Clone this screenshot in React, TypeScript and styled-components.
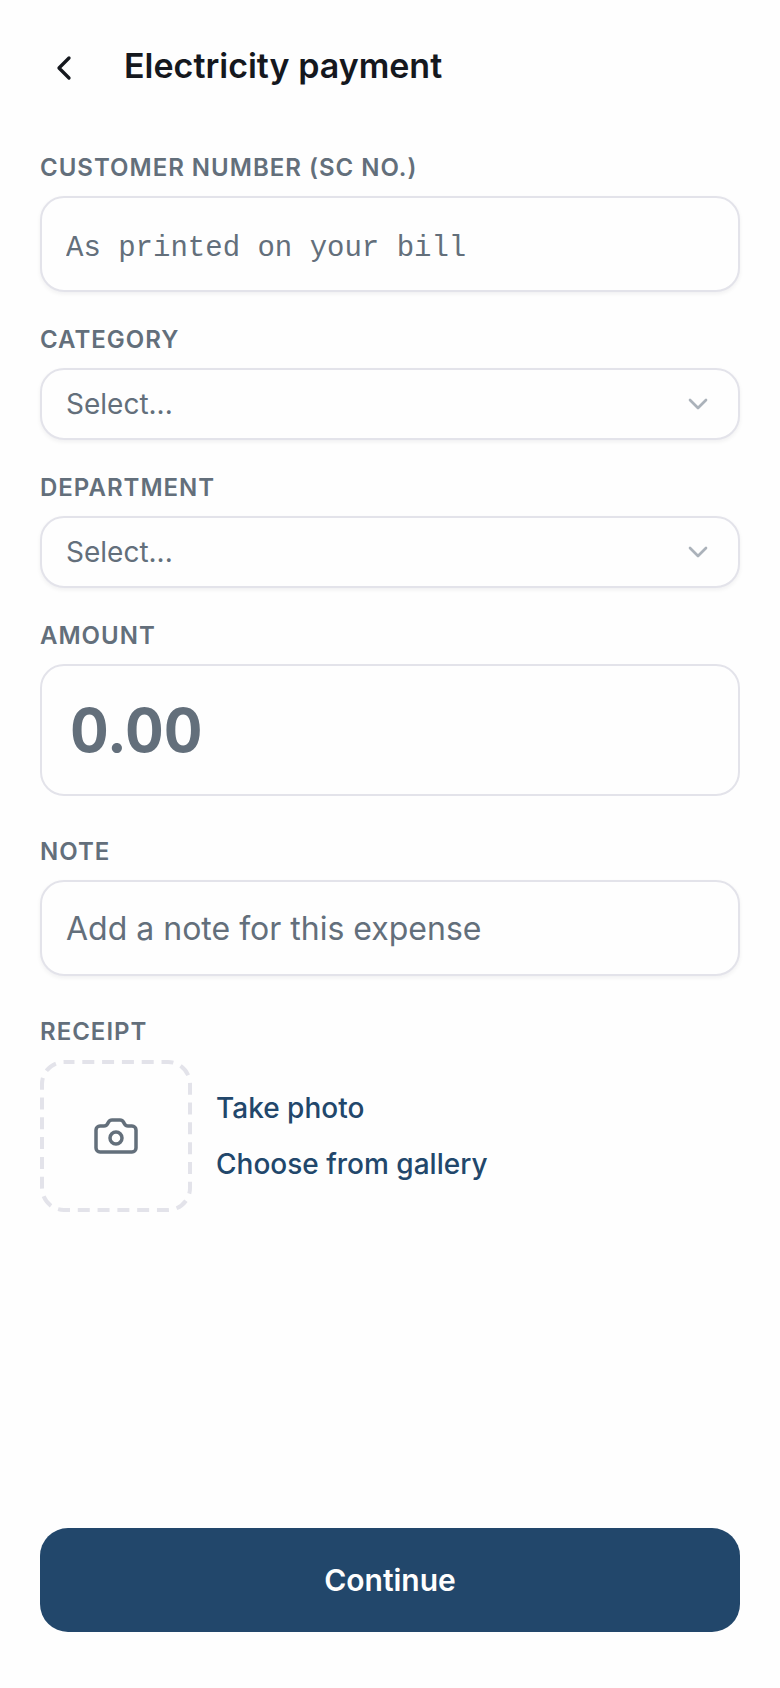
import React, { useRef, useState } from "react";
import styled, { createGlobalStyle, css } from "styled-components";
import { Camera, ChevronDown, ChevronLeft } from "lucide-react";

const GlobalStyle = createGlobalStyle`
  *, *::before, *::after {
    box-sizing: border-box;
  }
  body {
    margin: 0;
    background: #fefefe;
    color: #15181e;
    font-family: Inter, "Liberation Sans", sans-serif;
  }
  button, input, select {
    font: inherit;
    color: inherit;
  }
`;

const Page = styled.div`
  min-height: 100vh;
  display: flex;
  flex-direction: column;
`;

const Header = styled.header`
  display: flex;
  align-items: flex-start;
  gap: 20px;
  padding: 28px 24px 0;
`;

const BackButton = styled.button`
  display: flex;
  align-items: center;
  justify-content: center;
  width: 80px;
  height: 80px;
  padding: 0;
  border: 0;
  background: none;
  cursor: pointer;
`;

const Title = styled.h1`
  margin: 0;
  padding-top: 16px;
  font-size: 34px;
  font-weight: 600;
  line-height: 44px;
`;

const Form = styled.form`
  flex: 1;
  display: flex;
  flex-direction: column;
  padding: 44px 40px 56px;
`;

const Fields = styled.div`
  display: flex;
  flex-direction: column;
  gap: 40px;
`;

const FieldGroup = styled.div`
  display: flex;
  flex-direction: column;
  gap: 32px;
`;

const Field = styled.div`
  display: flex;
  flex-direction: column;
  gap: 12px;
`;

const labelText = css`
  font-size: 24px;
  font-weight: 600;
  line-height: 32px;
  letter-spacing: 1px;
  text-transform: uppercase;
  color: #636f7b;
`;

const Label = styled.label`
  ${labelText}
`;

const GroupLabel = styled.span`
  ${labelText}
`;

const control = css`
  width: 100%;
  border: 2px solid #e3e3ea;
  border-radius: 24px;
  background: #fefefe;
  outline: none;
  &:focus {
    border-color: #22476b;
  }
`;

const TextInput = styled.input<{ $mono?: boolean }>`
  ${control}
  height: 96px;
  padding: 0 24px;
  font-size: 32px;
  box-shadow: 0 2px 4px rgba(20, 24, 40, 0.06);
  &::placeholder {
    color: #636f7b;
    opacity: 1;
    ${(p) =>
      p.$mono &&
      css`
        font-family: "Liberation Mono", monospace;
        font-size: 29px;
      `}
  }
`;

const AmountInput = styled.input`
  ${control}
  height: 132px;
  padding: 0 28px;
  font-size: 60px;
  font-weight: 700;
  font-variant-numeric: tabular-nums;
  &::placeholder {
    color: #636f7b;
    opacity: 1;
  }
`;

const SelectWrap = styled.div`
  display: grid;
  align-items: center;
  & > * {
    grid-area: 1 / 1;
  }
  & > svg {
    justify-self: end;
    margin-right: 26px;
    color: #abb2ba;
    pointer-events: none;
  }
`;

const SelectInput = styled.select`
  ${control}
  height: 72px;
  padding: 0 72px 0 24px;
  font-size: 28px;
  color: #636f7b;
  appearance: none;
  box-shadow: 0 2px 4px rgba(20, 24, 40, 0.06);
`;

const ReceiptRow = styled.div`
  display: flex;
  align-items: center;
  gap: 24px;
`;

const PhotoBox = styled.button`
  position: relative;
  display: flex;
  align-items: center;
  justify-content: center;
  width: 152px;
  height: 152px;
  padding: 0;
  border: 0;
  background: none;
  color: #636f7b;
  cursor: pointer;
`;

const DashedOutline = styled.svg`
  position: absolute;
  inset: 0;
  fill: none;
  stroke: #e3e3ea;
  stroke-width: 4px;
  stroke-dasharray: 12 7.8;
`;

const ReceiptActions = styled.div`
  display: flex;
  flex-direction: column;
  align-items: flex-start;
  gap: 16px;
`;

const TextButton = styled.button`
  padding: 0;
  border: 0;
  background: none;
  font-size: 28px;
  font-weight: 500;
  line-height: 40px;
  color: #22476b;
  cursor: pointer;
`;

const SubmitButton = styled.button`
  height: 104px;
  margin-top: auto;
  border: 0;
  border-radius: 28px;
  background: #22476b;
  color: #fefefe;
  font-size: 30px;
  font-weight: 600;
  cursor: pointer;
`;

interface SelectFieldProps {
  id: string;
  label: string;
  options: string[];
}

function SelectField({ id, label, options }: SelectFieldProps) {
  const [value, setValue] = useState("");

  return (
    <Field>
      <Label htmlFor={id}>{label}</Label>
      <SelectWrap>
        <SelectInput id={id} value={value} onChange={(e) => setValue(e.target.value)}>
          <option value="">Select...</option>
          {options.map((option) => (
            <option key={option} value={option}>
              {option}
            </option>
          ))}
        </SelectInput>
        <ChevronDown size={32} />
      </SelectWrap>
    </Field>
  );
}

export default function App() {
  const fileRef = useRef<HTMLInputElement>(null);
  const openPicker = () => fileRef.current?.click();

  return (
    <Page>
      <GlobalStyle />
      <Header>
        <BackButton type="button" aria-label="Back">
          <ChevronLeft size={40} />
        </BackButton>
        <Title>Electricity payment</Title>
      </Header>
      <Form onSubmit={(e) => e.preventDefault()}>
        <Fields>
          <FieldGroup>
            <Field>
              <Label htmlFor="customer">Customer number (SC No.)</Label>
              <TextInput id="customer" $mono placeholder="As printed on your bill" />
            </Field>
            <SelectField id="category" label="Category" options={[]} />
            <SelectField id="department" label="Department" options={[]} />
            <Field>
              <Label htmlFor="amount">Amount</Label>
              <AmountInput id="amount" inputMode="decimal" placeholder="0.00" />
            </Field>
          </FieldGroup>
          <Field>
            <Label htmlFor="note">Note</Label>
            <TextInput id="note" placeholder="Add a note for this expense" />
          </Field>
          <Field role="group" aria-labelledby="receipt-label">
            <GroupLabel id="receipt-label">Receipt</GroupLabel>
            <ReceiptRow>
              <PhotoBox type="button" aria-label="Add receipt" onClick={openPicker}>
                <DashedOutline viewBox="0 0 152 152" aria-hidden="true">
                  <rect x="2" y="2" width="148" height="148" rx="22" strokeDashoffset="1.5" />
                </DashedOutline>
                <Camera size={48} strokeWidth={1.75} />
              </PhotoBox>
              <ReceiptActions>
                <TextButton type="button" onClick={openPicker}>Take photo</TextButton>
                <TextButton type="button" onClick={openPicker}>Choose from gallery</TextButton>
              </ReceiptActions>
              <input ref={fileRef} type="file" accept="image/*" aria-label="Receipt file" hidden />
            </ReceiptRow>
          </Field>
        </Fields>
        <SubmitButton type="submit">Continue</SubmitButton>
      </Form>
    </Page>
  );
}
